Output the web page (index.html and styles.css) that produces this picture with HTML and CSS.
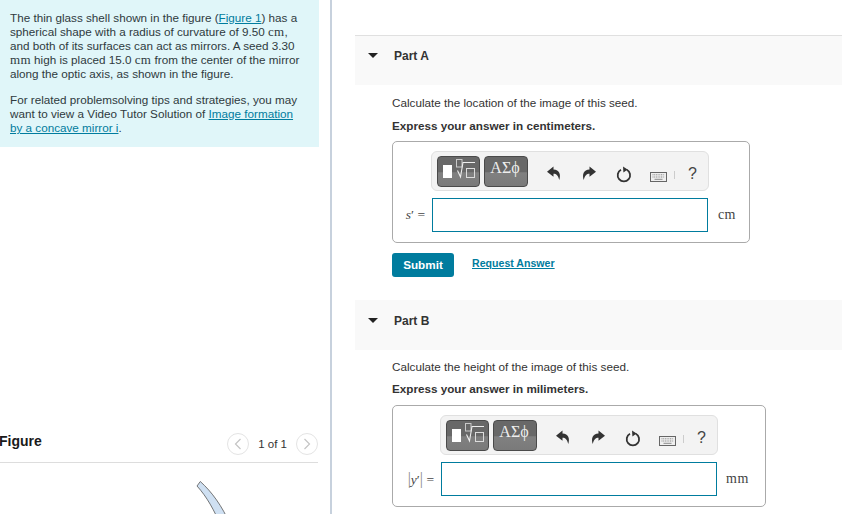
FILE: index.html
```html
<!DOCTYPE html>
<html lang="en">
<head>
<meta charset="utf-8">
<title>Part A</title>
<link rel="stylesheet" href="styles.css">
</head>
<body>
<svg class="defs" width="0" height="0" aria-hidden="true">
  <defs>
    <symbol id="i-matrix" viewBox="0 0 43 31">
      <rect x="6" y="9" width="9" height="13" fill="#fff"/>
      <rect x="19.500" y="3.500" width="5.500" height="7.500" fill="none" stroke="#c9c9c9"/>
      <path d="M20.500 14.500 23.500 21 26 6.500H38" fill="none" stroke="#eee" stroke-width="1.100"/>
      <rect x="29.500" y="12.500" width="8" height="9" fill="none" stroke="#dcdcdc"/>
    </symbol>
    <symbol id="i-undo" viewBox="0 0 14 14">
      <path d="M6.500 .5 0 5.800 6.500 10.800V7.800C9.500 7.800 11 9.500 12.300 14 14 8.500 12.500 3.400 6.500 3.400Z" fill="#333"/>
    </symbol>
    <symbol id="i-redo" viewBox="0 0 14 14">
      <path d="M7.500 .5 14 5.800 7.500 10.800V7.800C4.500 7.800 3 9.500 1.700 14 0 8.500 1.500 3.400 7.500 3.400Z" fill="#333"/>
    </symbol>
    <symbol id="i-reset" viewBox="0 0 16 17">
      <path d="M5 3.700A6.200 6.200 0 1 0 10.800 3.700" fill="none" stroke="#333" stroke-width="1.800"/>
      <path d="M7 .4 11.600 3.400 7.400 6.600Z" fill="#333"/>
    </symbol>
    <symbol id="i-keys" viewBox="0 0 17 10">
      <rect x=".5" y=".5" width="16" height="9" fill="#efefef" stroke="#666"/>
      <path d="M2.500 2.800H14.500M2.500 5H14.500" stroke="#8a8a8a" stroke-dasharray="1 .7"/>
      <path d="M4.500 7.300H12.500" stroke="#8a8a8a"/>
    </symbol>
  </defs>
</svg>
<div class="page">
  <aside class="left">
    <section class="intro">
      <p>The thin glass shell shown in the figure (<a href="#">Figure 1</a>) has a<br>spherical shape with a radius of curvature of 9.50 <span class="unit">cm</span>,<br>and both of its surfaces can act as mirrors. A seed 3.30<br><span class="unit">mm</span> high is placed 15.0 <span class="unit">cm</span> from the center of the mirror<br>along the optic axis, as shown in the figure.</p>
      <p>For related problemsolving tips and strategies, you may<br>want to view a Video Tutor Solution of <a href="#">Image formation<br>by a concave mirror i</a>.</p>
    </section>
    <section class="figure">
      <header class="figure-head">
        <h2>Figure</h2>
        <div class="pager">
          <button class="page-btn" type="button" aria-label="Previous"><svg width="8" height="12" viewBox="0 0 8 12"><path d="M6.500 1 1.500 6l5 5" fill="none" stroke="#c4c4c4" stroke-width="1.200"/></svg></button>
          <span>1 of 1</span>
          <button class="page-btn" type="button" aria-label="Next"><svg width="8" height="12" viewBox="0 0 8 12"><path d="M1.500 1l5 5-5 5" fill="none" stroke="#c4c4c4" stroke-width="1.200"/></svg></button>
        </div>
      </header>
      <svg class="shell" width="60" height="46" viewBox="0 0 60 46"><path d="M17 18 20.300 13.500C32 24 42 38 50 56L41 58C34 42 27 29 17 18Z" fill="#cfe0f2" stroke="#555" stroke-width=".8"/></svg>
    </section>
  </aside>
  <main class="right">
    <section class="part part-a">
      <header class="part-head"><span class="caret"></span><h3>Part A</h3></header>
      <div class="part-body">
        <p class="task">Calculate the location of the image of this seed.</p>
        <p class="ask">Express your answer in centimeters.</p>
        <div class="answer">
          <div class="toolbar">
            <span class="tool-btn"><svg width="43" height="31"><use href="#i-matrix"/></svg></span>
            <span class="tool-btn greek">ΑΣϕ</span>
            <svg class="ico undo" width="14" height="14"><use href="#i-undo"/></svg>
            <svg class="ico redo" width="14" height="14"><use href="#i-redo"/></svg>
            <svg class="ico reset" width="16" height="17"><use href="#i-reset"/></svg>
            <svg class="ico keys" width="17" height="10"><use href="#i-keys"/></svg>
            <span class="sep"></span>
            <span class="help">?</span>
          </div>
          <div class="entry">
            <label class="math"><i>s</i>′&nbsp;=</label>
            <span class="field"></span>
            <span class="unit-label">cm</span>
          </div>
        </div>
        <div class="actions">
          <button class="submit" type="button">Submit</button>
          <a class="request" href="#">Request Answer</a>
        </div>
      </div>
    </section>
    <section class="part part-b">
      <header class="part-head"><span class="caret"></span><h3>Part B</h3></header>
      <div class="part-body">
        <p class="task">Calculate the height of the image of this seed.</p>
        <p class="ask">Express your answer in milimeters.</p>
        <div class="answer answer-b">
          <div class="toolbar">
            <span class="tool-btn"><svg width="43" height="31"><use href="#i-matrix"/></svg></span>
            <span class="tool-btn greek">ΑΣϕ</span>
            <svg class="ico undo" width="14" height="14"><use href="#i-undo"/></svg>
            <svg class="ico redo" width="14" height="14"><use href="#i-redo"/></svg>
            <svg class="ico reset" width="16" height="17"><use href="#i-reset"/></svg>
            <svg class="ico keys" width="17" height="10"><use href="#i-keys"/></svg>
            <span class="sep"></span>
            <span class="help">?</span>
          </div>
          <div class="entry">
            <label class="math"><span class="bar">|</span><i>y</i>′<span class="bar">|</span> =</label>
            <span class="field"></span>
            <span class="unit-label">mm</span>
          </div>
        </div>
      </div>
    </section>
  </main>
</div>
</body>
</html>
```
FILE: styles.css
```css
* { box-sizing: border-box; }
html, body { margin: 0; padding: 0; height: 100%; overflow: hidden; background: #fff; }
body { font-family: "Liberation Sans", Arial, sans-serif; font-size: 11.700px; color: #333; }
.defs { position: absolute; }
p, h2, h3 { margin: 0; }
a { color: #007c9e; }

.page { display: flex; height: 514px; overflow: hidden; }

.left { width: 332px; flex: none; border-right: 2px solid #c7d1dd; height: 514px; overflow: hidden; }
.intro { width: 319px; height: 147px; padding: 11px 10px 0; background: #e0f6f9; line-height: 14px; color: #2f3a40; }
.intro p + p { margin-top: 12px; }
.unit { font-family: "Liberation Serif", serif; font-size: 13px; letter-spacing: .3px; }

.figure { margin-top: 278px; width: 318px; }
.figure-head { display: flex; justify-content: space-between; align-items: center; height: 38px; border-bottom: 1px solid #ddd; }
.figure-head h2 { font-size: 14px; font-weight: bold; color: #1a1a1a; margin: -6px 0 0 -1px; }
.pager { display: flex; align-items: center; gap: 9px; font-size: 11.500px; color: #333; }
.page-btn { width: 22px; height: 22px; border: 1px solid #e4e4e4; border-radius: 50%; background: #fff; padding: 0; display: flex; align-items: center; justify-content: center; }
.shell { display: block; margin: 5px 0 0 180px; overflow: hidden; }

.right { flex: 1; padding-left: 23px; min-width: 0; }
.part-a { margin-top: 35px; }
.part-b { margin-top: 23px; }
.part-head { display: flex; align-items: center; height: 50px; background: #f9f9f9; padding-left: 13px; }
.part-a .part-head { border-top: 1px solid #e0e0e0; }
.part-head h3 { font-size: 12px; font-weight: bold; color: #333; margin-left: 16px; margin-top: -9px; }
.caret { width: 0; height: 0; border-left: 5px solid transparent; border-right: 5px solid transparent; border-top: 5px solid #222; margin-top: -10px; }

.part-body { padding: 11px 0 0 37px; }
.part-b .part-body { padding-top: 10px; }
.task, .ask { line-height: 14px; }
.ask { font-weight: bold; margin-top: 9px; }
.part-b .ask { margin-top: 8px; }

.answer { width: 358px; height: 102px; margin-top: 8px; border: 1px solid #aaa; border-radius: 5px; padding: 9px 0 0; }
.answer-b { width: 374px; margin-top: 9px; }
.toolbar { display: flex; align-items: center; width: 278px; height: 40px; margin-left: 38px; padding-left: 5px; background: #f3f3f3; border: 1px solid #e0e0e0; border-radius: 6px; }
.answer-b .toolbar { margin-left: 47px; }
.tool-btn { width: 43px; height: 31px; margin-right: 1px; border: 1px solid #4a4a4a; border-radius: 4px; background: linear-gradient(#686868 0, #686868 52%, #808080 54%, #7a7a7a 100%); display: block; overflow: hidden; }
.tool-btn svg { display: block; margin: -1px 0 0 -1px; }
.greek { width: 44px; margin-left: 3px; padding-right: 2px; color: #eee; font: 16px/21px "Liberation Serif", serif; text-align: center; }
.ico { flex: none; display: block; margin-top: 4px; }
.undo { margin-left: 18px; }
.redo { margin-left: 21px; }
.reset { margin-left: 20px; margin-top: 6px; }
.keys { margin-left: 18px; margin-top: 11px; }
.sep { width: 1px; height: 8px; background: #ccc; margin-left: 7px; margin-top: 8px; }
.help { margin-left: 13px; margin-top: 6px; font-size: 16px; color: #444; }

.entry { display: flex; align-items: center; height: 34px; margin-top: 7px; }
.math { width: 39px; flex: none; text-align: right; padding-right: 7px; font: 13.500px "Liberation Serif", serif; color: #444; white-space: nowrap; }
.answer-b .math { width: 48px; }
.bar { color: #888; font-size: 16px; }
.field { width: 276px; height: 34px; flex: none; border: 1px solid #007c9e; background: #fff; }
.unit-label { margin-left: 10px; font: 14px "Liberation Serif", serif; letter-spacing: .2px; color: #444; }
.answer-b .unit-label { margin-left: 9px; letter-spacing: .7px; }

.actions { display: flex; align-items: center; margin-top: 10px; }
.submit { width: 62px; height: 24px; padding: 0 0 2px; border: 0; border-radius: 3px; background: #007c9e; color: #fff; font: bold 11.700px "Liberation Sans", Arial, sans-serif; }
.request { margin-left: 18px; font-size: 10.600px; font-weight: bold; color: #007c9e; margin-top: -5px; }
```
